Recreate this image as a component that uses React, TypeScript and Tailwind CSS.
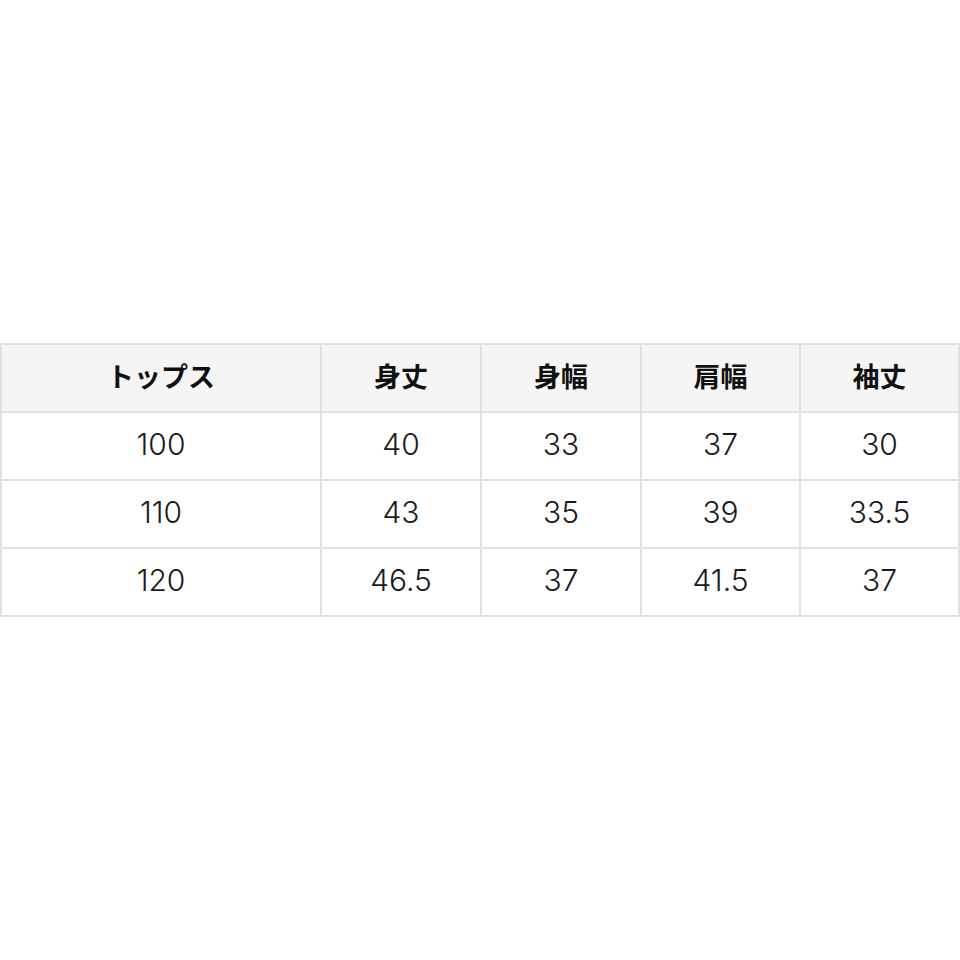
const HEAD = ["トップス", "身丈", "身幅", "肩幅", "袖丈"];

const ROWS = [
  ["100", "40", "33", "37", "30"],
  ["110", "43", "35", "39", "33.5"],
  ["120", "46.5", "37", "41.5", "37"],
];

const WIDTHS = ["w-[320px]", "w-[160px]", "w-[160px]", "w-[159px]", "w-[159px]"];

export default function App() {
  return (
    <div
      className="flex h-[960px] w-[960px] items-center bg-white"
      style={{ fontFamily: '"Noto Sans CJK JP", "Noto Sans", sans-serif' }}
    >
      <table className="w-[959px] table-fixed border-collapse">
        <colgroup>
          {WIDTHS.map((w, i) => (
            <col key={i} className={w} />
          ))}
        </colgroup>
        <thead>
          <tr className="h-[68px] bg-[#f5f5f5]">
            {HEAD.map((h) => (
              <th
                key={h}
                className="border-2 border-[#e2e2e2] p-0 pb-[4px] text-center text-[27px] font-bold text-[#111]"
              >
                {h}
              </th>
            ))}
          </tr>
        </thead>
        <tbody>
          {ROWS.map((row) => (
            <tr key={row[0]} className="h-[68px]">
              {row.map((v, i) => (
                <td
                  key={i}
                  className="border-2 border-[#e2e2e2] p-0 pb-[4px] text-center font-['Inter',sans-serif] text-[30px] font-light leading-none text-[#1a1a1a]"
                >
                  {v}
                </td>
              ))}
            </tr>
          ))}
        </tbody>
      </table>
    </div>
  );
}
